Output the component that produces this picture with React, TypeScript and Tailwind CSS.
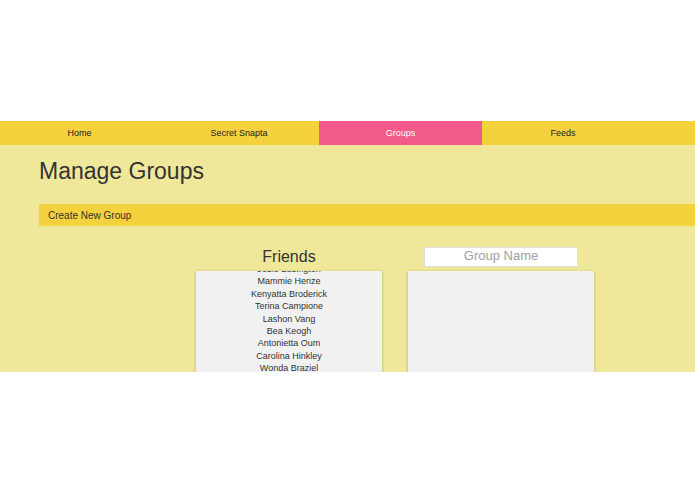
import React from "react";

const friends = [
  "Jodie Ludington",
  "Mammie Henze",
  "Kenyatta Broderick",
  "Terina Campione",
  "Lashon Vang",
  "Bea Keogh",
  "Antonietta Oum",
  "Carolina Hinkley",
  "Wonda Braziel",
  "Shanell Fenn",
];

export default function App() {
  return (
    <div className="w-[695px] h-[494px] bg-white" style={{ fontFamily: '"Liberation Sans", Arial, sans-serif' }}>
      <div className="h-[121px]" />
      <div className="h-[251px] overflow-hidden bg-[#efe799]">
        <nav className="flex h-[24px] bg-[#f4d23e] text-[9px] text-[#222]">
          <div className="w-[159px] flex items-center justify-center pt-[2px]">Home</div>
          <div className="w-[160px] flex items-center justify-center pt-[2px]">Secret Snapta</div>
          <div className="w-[163px] flex items-center justify-center pt-[2px] bg-[#f25a8a] text-white">Groups</div>
          <div className="w-[162px] flex items-center justify-center pt-[2px]">Feeds</div>
        </nav>
        <div className="pl-[39px]">
          <h1 className="pt-[12px] text-[23px] leading-[28px] text-[#333]">Manage Groups</h1>
          <div className="mt-[19px] h-[22px] bg-[#f4d23e] flex items-center pl-[9px] pt-[1px] text-[10px] text-[#333]">
            Create New Group
          </div>
          <div className="flex mt-[20px] ml-[157px] gap-[26px]">
            <div className="w-[186px] flex flex-col items-center">
              <div className="h-[25px] text-[16px] leading-[22px] text-[#333]">Friends</div>
              <div className="w-[186px] h-[120px] bg-[#f0f1f0] shadow-[0_1px_3px_rgba(0,0,0,0.25)] overflow-hidden">
                <div className="-mt-[8px] flex flex-col items-center text-[9px] leading-[12.4px] text-[#333]">
                  {friends.map((f) => (
                    <div key={f}>{f}</div>
                  ))}
                </div>
              </div>
            </div>
            <div className="w-[186px] flex flex-col items-center">
              <div className="h-[25px] pt-[1px]">
                <div className="w-[154px] h-[20px] bg-white border border-[#ddd] flex items-center justify-center pb-[3px] text-[13px] text-[#a0a0a0]">
                  Group Name
                </div>
              </div>
              <div className="w-[186px] h-[120px] bg-[#f0f1f0] shadow-[0_1px_3px_rgba(0,0,0,0.25)]" />
            </div>
          </div>
        </div>
      </div>
    </div>
  );
}
